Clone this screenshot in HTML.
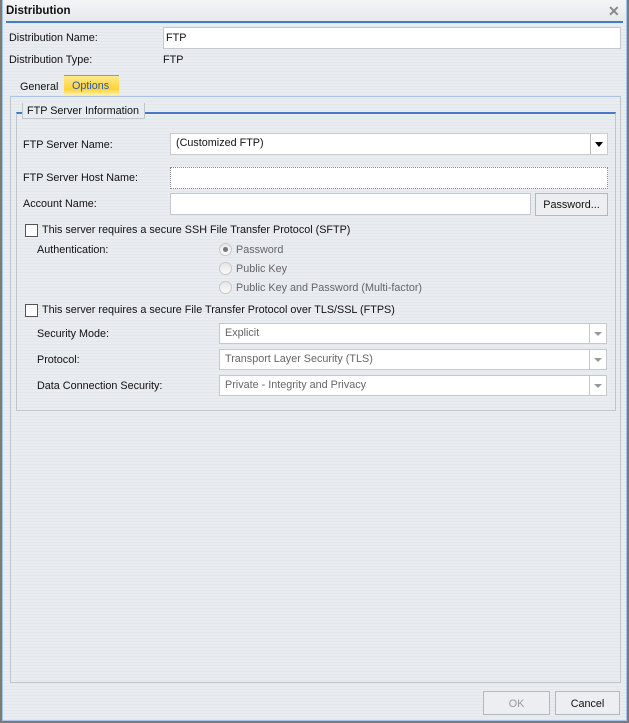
<!DOCTYPE html>
<html><head><style>
*{margin:0;padding:0;box-sizing:border-box}
body{width:629px;height:723px;overflow:hidden;font-family:"Liberation Sans",sans-serif;font-size:10.8px;color:#111;background:#7b7b7b;position:relative}
.win{position:absolute;left:2px;top:0;width:625px;height:721px;background:repeating-linear-gradient(#e9ecf0 0 2px,#e3e6eb 2px 3px);border:1px solid #a9c3e6;border-top:none}
.a{position:absolute;white-space:nowrap}
.inp{position:absolute;background:#fff;border:1px solid #c5c8cc}
.dis{color:#666}
.cb{position:absolute;width:13px;height:13px;background:#fff;border:1px solid #555}
.rd{position:absolute;width:13px;height:13px;border-radius:50%;border:1px solid #c8c8c8;background:linear-gradient(#e6e6e6,#fafafa)}
.btn{position:absolute;border:1px solid #b5b7ba;background:#eceef1;text-align:center}
.arr{position:absolute;right:0;top:0;bottom:0;width:17px;border-left:1px solid #c5c8cc;background:#fff}
.arr:after{content:"";position:absolute;left:4px;top:8px;border-left:4px solid transparent;border-right:4px solid transparent;border-top:4px solid #999}
</style></head><body>
<div class="win">
<div class="a" style="left:0;top:0;width:623px;height:21px;background:linear-gradient(#f4f5f7,#e6e8eb)"></div>
<div class="a" style="left:3px;top:5px;font-weight:bold;font-size:11.5px">Distribution</div>
<div class="a" style="left:605px;top:3px;font-size:14px;color:#888;font-weight:bold">✕</div>
<div class="a" style="left:3px;top:21px;width:617px;height:2px;background:#4a78c8"></div>

<div class="a" style="left:6px;top:32px">Distribution Name:</div>
<div class="inp" style="left:160px;top:27px;width:458px;height:22px"><span class="a" style="left:2px;top:4px">FTP</span></div>
<div class="a" style="left:6px;top:54px">Distribution Type:</div>
<div class="a" style="left:160px;top:54px">FTP</div>

<div class="a" style="left:17px;top:81px">General</div>
<div class="a" style="left:61px;top:75px;width:55px;height:20px;border-top:1px solid #999;background:linear-gradient(#ffe98a,#fdd23a 70%,#fff0b0)"></div>
<div class="a" style="left:69px;top:80px;color:#2d57a6">Options</div>

<div class="a" style="left:7px;top:96px;width:611px;height:587px;border:1px solid #c3c5c8;border-top-color:#a9c3e6"></div>
<div class="a" style="left:13px;top:112px;width:600px;height:299px;border:1px solid #c3c5c8;border-top:2px solid #4a78c8"></div>
<div class="a" style="left:19px;top:103px;width:123px;height:16px;background:#e8ebef;border:1px solid #c3c5c8;border-top:none;padding:2px 0 0 4px">FTP Server Information</div>

<div class="a" style="left:20px;top:139px">FTP Server Name:</div>
<div class="inp" style="left:167px;top:133px;width:438px;height:22px;border-color:#ccc"><span class="a" style="left:5px;top:3px">(Customized FTP)</span>
<div class="a" style="right:0;top:0;width:17px;height:20px;border-left:1px solid #bbb"></div>
<div class="a" style="right:4px;top:8px;border-left:4px solid transparent;border-right:4px solid transparent;border-top:5px solid #000"></div></div>

<div class="a" style="left:20px;top:172px">FTP Server Host Name:</div>
<div class="inp" style="left:167px;top:167px;width:438px;height:22px;border:1px dotted #888"></div>
<div class="a" style="left:20px;top:198px">Account Name:</div>
<div class="inp" style="left:167px;top:193px;width:361px;height:22px"></div>
<div class="btn" style="left:532px;top:193px;width:73px;height:23px;padding-top:5px">Password...</div>

<div class="cb" style="left:22px;top:224px"></div>
<div class="a" style="left:39px;top:224px">This server requires a secure SSH File Transfer Protocol (SFTP)</div>
<div class="a" style="left:34px;top:244px">Authentication:</div>
<div class="rd" style="left:216px;top:243px"><div class="a" style="left:3px;top:3px;width:5px;height:5px;border-radius:50%;background:#777"></div></div>
<div class="a dis" style="left:233px;top:244px">Password</div>
<div class="rd" style="left:216px;top:262px"></div>
<div class="a dis" style="left:233px;top:263px">Public Key</div>
<div class="rd" style="left:216px;top:281px"></div>
<div class="a dis" style="left:233px;top:282px">Public Key and Password (Multi-factor)</div>

<div class="cb" style="left:22px;top:304px"></div>
<div class="a" style="left:39px;top:304px">This server requires a secure File Transfer Protocol over TLS/SSL (FTPS)</div>
<div class="a" style="left:34px;top:328px">Security Mode:</div>
<div class="inp" style="left:216px;top:323px;width:388px;height:21px"><span class="a dis" style="left:5px;top:3px">Explicit</span><div class="arr"></div></div>
<div class="a" style="left:34px;top:354px">Protocol:</div>
<div class="inp" style="left:216px;top:349px;width:388px;height:21px"><span class="a dis" style="left:5px;top:3px">Transport Layer Security (TLS)</span><div class="arr"></div></div>
<div class="a" style="left:34px;top:380px">Data Connection Security:</div>
<div class="inp" style="left:216px;top:375px;width:388px;height:21px"><span class="a dis" style="left:5px;top:3px">Private - Integrity and Privacy</span><div class="arr"></div></div>

<div class="btn dis" style="left:480px;top:691px;width:67px;height:24px;padding-top:6px;color:#999">OK</div>
<div class="btn" style="left:552px;top:691px;width:65px;height:24px;padding-top:6px">Cancel</div>
</div>
</body></html>
